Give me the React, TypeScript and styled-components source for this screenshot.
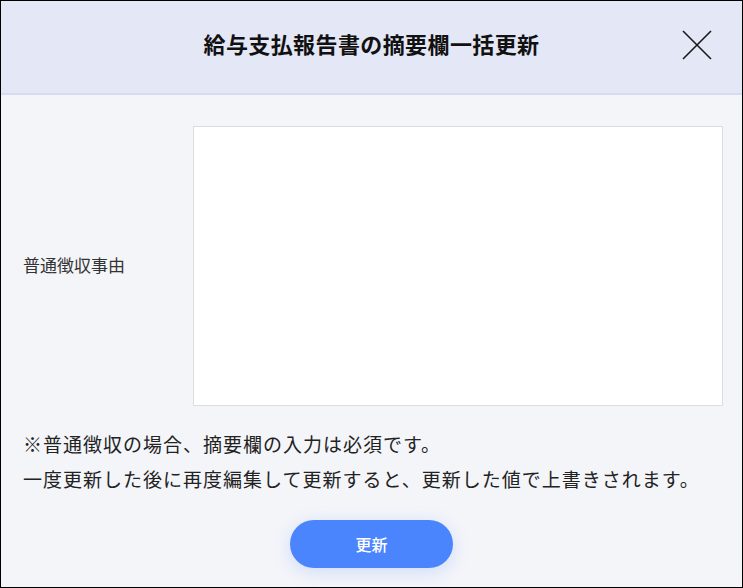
import { createGlobalStyle } from "styled-components";
import styled from "styled-components";

const GlobalStyle = createGlobalStyle`
  html, body {
    margin: 0;
    padding: 0;
    background: #f4f5f9;
  }
  * {
    box-sizing: border-box;
  }
`;

function App() {
  return (
    <>
      <GlobalStyle />
      <Dialog>
        <Header>
          <Title>給与支払報告書の摘要欄一括更新</Title>
          <CloseButton aria-label="閉じる">
            <svg width="30" height="30" viewBox="0 0 30 30">
              <path
                d="M1 1 L29 29 M29 1 L1 29"
                stroke="#1a1a1a"
                strokeWidth="1.6"
                fill="none"
              />
            </svg>
          </CloseButton>
        </Header>
        <Body>
          <FieldRow>
            <Label htmlFor="summary">普通徴収事由</Label>
            <TextArea id="summary" />
          </FieldRow>
          <Notes>
            <p>※普通徴収の場合、摘要欄の入力は必須です。</p>
            <p>一度更新した後に再度編集して更新すると、更新した値で上書きされます。</p>
          </Notes>
          <ButtonWrapper>
            <SubmitButton>更新</SubmitButton>
          </ButtonWrapper>
        </Body>
      </Dialog>
    </>
  );
}

export default App;

const Dialog = styled.div`
  width: 743px;
  height: 588px;
  border: 1px solid #000;
  background: #f4f5f9;
  display: flex;
  flex-direction: column;
  font-family: "Noto Sans CJK JP", "Noto Sans", sans-serif;
  color: #222;
`;

const Header = styled.header`
  position: relative;
  height: 94px;
  flex-shrink: 0;
  background: #e4e7f6;
  border-bottom: 2px solid #d6daf3;
  display: flex;
  align-items: center;
  justify-content: center;
  padding-bottom: 8px;
`;

const Title = styled.h1`
  margin: 0;
  font-size: 22px;
  font-weight: 700;
  letter-spacing: 0.4px;
  color: #111;
`;

const CloseButton = styled.button`
  position: absolute;
  right: 30px;
  top: 29px;
  width: 30px;
  height: 30px;
  padding: 0;
  border: none;
  background: none;
  cursor: pointer;
  display: flex;
`;

const Body = styled.div`
  flex: 1;
  padding: 31px 19px 0 22px;
  display: flex;
  flex-direction: column;
`;

const FieldRow = styled.div`
  display: grid;
  grid-template-columns: 170px 1fr;
  align-items: center;
`;

const Label = styled.label`
  font-size: 17px;
  color: #333;
  padding-bottom: 4px;
`;

const TextArea = styled.textarea`
  display: block;
  width: 100%;
  height: 280px;
  border: 1px solid #dcdde1;
  background: #fff;
  resize: none;
  outline: none;
  font-family: inherit;
  font-size: 16px;
`;

const Notes = styled.div`
  margin-top: 20px;
  font-size: 19px;
  letter-spacing: 1px;
  line-height: 35px;
  color: #222;

  p {
    margin: 0;
  }
`;

const ButtonWrapper = styled.div`
  margin: 24px 3px 0 0;
  display: flex;
  justify-content: center;
`;

const SubmitButton = styled.button`
  width: 163px;
  height: 48px;
  border: none;
  border-radius: 24px;
  background: #4b85fe;
  color: #fff;
  font-family: inherit;
  font-size: 16px;
  font-weight: 500;
  box-shadow: 0 4px 18px rgba(75, 133, 254, 0.22);
  cursor: pointer;
`;
